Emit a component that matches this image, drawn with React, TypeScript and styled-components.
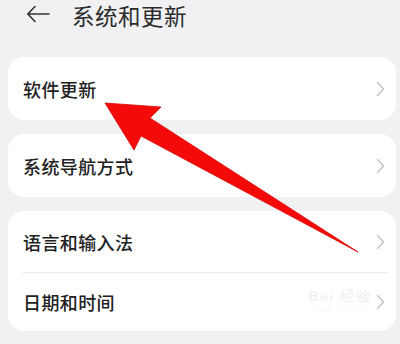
import React from "react";
import styled, { createGlobalStyle } from "styled-components";

const Global = createGlobalStyle`
  html, body { margin: 0; padding: 0; background: #f1f1f3; }
  body { font-family: "Noto Sans CJK SC", "Noto Sans", sans-serif; }
`;

const Page = styled.div`
  position: relative;
  width: 400px;
  height: 344px;
  overflow: hidden;
  background: #f1f1f3;
  padding: 0 4px 0 8px;
  box-sizing: border-box;
`;

const Header = styled.div`
  display: flex;
  align-items: center;
  height: 30px;
  margin-bottom: 27px;
  padding-left: 18px;
`;

const BackIcon = styled.svg`
  flex: none;
  margin-top: -2px;
`;

const Title = styled.div`
  margin-left: 22px;
  font-size: 22.5px;
  color: #2b2b2b;
  line-height: 30px;
  letter-spacing: 0.5px;
`;

const List = styled.div`
  display: flex;
  flex-direction: column;
  gap: 14px;
`;

const Card = styled.div`
  background: #ffffff;
  border-radius: 16px;
  overflow: hidden;
`;

const Row = styled.div<{ $h: number; $divider?: boolean }>`
  display: flex;
  align-items: center;
  justify-content: space-between;
  height: ${(p) => p.$h}px;
  padding: 0 11px 0 15px;
  position: relative;
  ${(p) =>
    p.$divider
      ? `&::after { content: ""; position: absolute; left: 14px; right: 8px; bottom: 0; height: 1px; background: #ececec; }`
      : ""}
`;

const Label = styled.span`
  font-size: 18px;
  font-weight: 500;
  color: #222;
  letter-spacing: 0.4px;
`;

const Overlay = styled.svg`
  position: absolute;
  left: 0;
  top: 0;
  pointer-events: none;
`;

const Watermark = styled.div`
  position: absolute;
  left: 308px;
  top: 288px;
  display: flex;
  flex-direction: column;
  align-items: center;
  color: rgba(0, 0, 0, 0.06);
  font-family: "Liberation Sans", sans-serif;
`;

const WmMain = styled.span`
  font-size: 15px;
  font-weight: 700;
  letter-spacing: 1px;
  line-height: 16px;
`;

const WmSub = styled.span`
  font-size: 7px;
  line-height: 9px;
`;

const Back = () => (
  <BackIcon width="24" height="20" viewBox="0 0 24 20">
    <path d="M2 10H23M9 2.5L1.8 10L9 17.5" fill="none" stroke="#333" strokeWidth="1.6" strokeLinecap="round" strokeLinejoin="round" />
  </BackIcon>
);

const Chevron = () => (
  <svg width="9" height="16" viewBox="0 0 9 16">
    <path d="M1.5 1.5L7.5 8L1.5 14.5" fill="none" stroke="#c4c4c6" strokeWidth="1.5" strokeLinecap="round" strokeLinejoin="round" />
  </svg>
);

const Item = ({ label, h, divider }: { label: string; h: number; divider?: boolean }) => (
  <Row $h={h} $divider={divider}>
    <Label>{label}</Label>
    <Chevron />
  </Row>
);

export default function App() {
  return (
    <>
      <Global />
      <Page>
        <Header>
          <Back />
          <Title>系统和更新</Title>
        </Header>
        <List>
          <Card>
            <Item label="软件更新" h={63} />
          </Card>
          <Card>
            <Item label="系统导航方式" h={63} />
          </Card>
          <Card>
            <Item label="语言和输入法" h={62} divider />
            <Item label="日期和时间" h={58} />
          </Card>
        </List>
        <Watermark>
          <WmMain>Bai 经验</WmMain>
          <WmSub>jingyan.baidu.com</WmSub>
        </Watermark>
        <Overlay width="400" height="344" viewBox="0 0 400 344">
          <polygon
            points="105,103 161,107 150,118 358,252 141,136 134,150"
            fill="#f50a0a"
            stroke="#d80808"
            strokeWidth="0.8"
            strokeLinejoin="round"
          />
        </Overlay>
      </Page>
    </>
  );
}
